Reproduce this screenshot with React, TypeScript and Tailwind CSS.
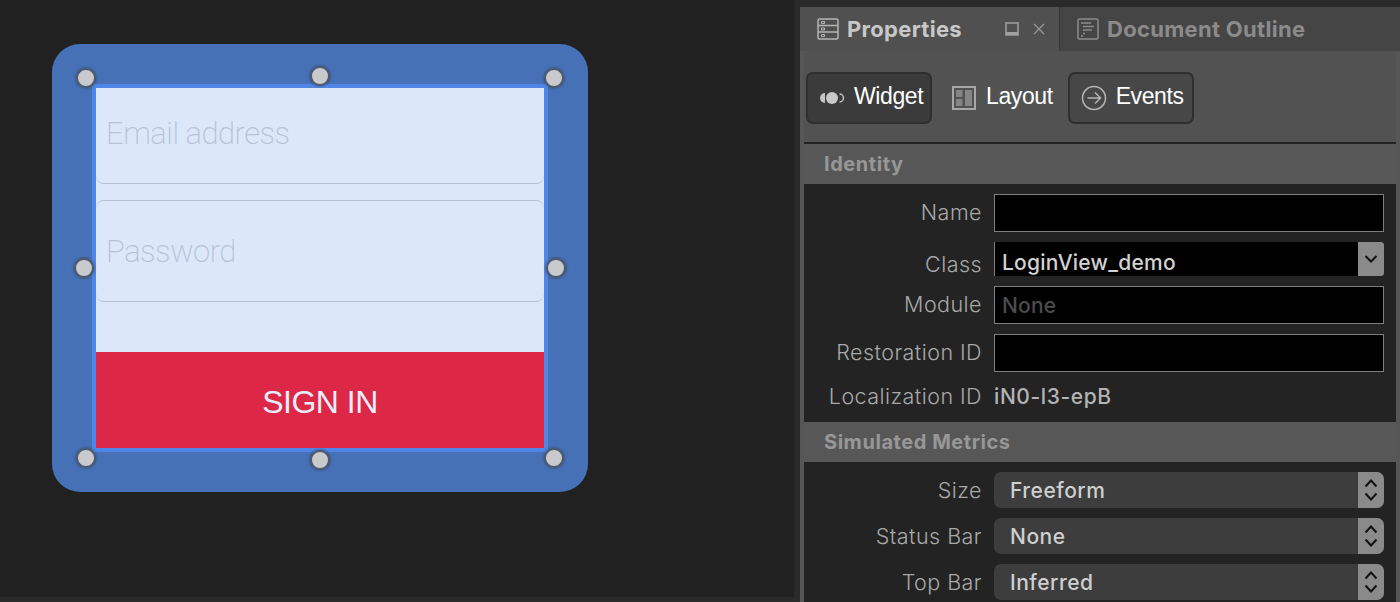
import type { ReactNode } from "react";

const sans = "font-['Inter','Noto_Sans',sans-serif]";
const helv = "font-['Liberation_Sans',Arial,sans-serif]";
const thin = "font-['Roboto','Noto_Sans',sans-serif]";

const Handle = ({ className }: { className: string }) => (
  <div className={`absolute h-[20px] w-[20px] rounded-full border-2 border-[#4f5b6e] bg-[#c9cacd] shadow-[0_0_3px_#33415c] ${className}`} />
);

const Row = ({ label, className, labelClass = "", children }: { label: string; className: string; labelClass?: string; children: ReactNode }) => (
  <div className={`flex ${className}`}>
    <div className={`w-[178px] shrink-0 self-center text-right text-[21.5px] font-light leading-none tracking-[0.45px] text-[#a8a8a8] ${sans} ${labelClass}`}>{label}</div>
    <div className="ml-[12px] h-full w-[390px] shrink-0">{children}</div>
  </div>
);

const TextBox = ({ children }: { children?: ReactNode }) => (
  <div className={`flex h-full items-center border border-[#7d7d7d] bg-black pl-[7px] pt-[2px] text-[21px] font-medium tracking-[0.2px] text-[#4c4c4c] ${sans}`}>
    {children}
  </div>
);

const Stepper = ({ label, value, className }: { label: string; value: string; className: string }) => (
  <Row label={label} className={className} labelClass="pt-[2px]">
    <div className="flex h-full overflow-hidden rounded-[7px] bg-[#3d3d3d]">
      <div className={`flex-1 pl-[16px] pt-[1px] text-[21px] font-medium leading-[36px] tracking-[0.5px] text-[#cfcfcf] ${sans}`}>{value}</div>
      <div className="flex w-[26px] items-center justify-center bg-[#8a8a8a]">
        <svg width="14" height="26" viewBox="0 0 14 26" fill="none" stroke="#111" strokeWidth="2">
          <path d="M1.5 9.5 7 3.5l5.5 6" />
          <path d="M1.5 16.5 7 22.5l5.5-6" />
        </svg>
      </div>
    </div>
  </Row>
);

const SectionHeader = ({ title }: { title: string }) => (
  <div className={`h-[40px] bg-[#575757] pl-[20px] text-[20px] font-bold leading-[40px] tracking-[0.55px] text-[#979797] ${sans}`}>{title}</div>
);

export default function App() {
  return (
    <div className="flex h-[602px] w-[1400px] overflow-hidden bg-[#2a2a2a]">
      {/* Canvas */}
      <div className="h-[597px] w-[794px] shrink-0 bg-[#212121] pl-[52px] pt-[44px]">
        <div className="relative h-[448px] w-[536px] rounded-[28px] bg-[#4671b7] pl-[40px] pt-[40px]">
          <div className="h-[368px] w-[456px] border-4 border-[#4f86e8] bg-[#dce8fa]">
            <div className={`h-[96px] rounded-b-[8px] border-b border-[#b4bed2] pl-[10px] text-[31px] font-extralight leading-[92px] tracking-[-0.5px] text-[#b7c2d8] ${thin}`}>
              Email address
            </div>
            <div className={`mt-[16px] h-[102px] rounded-[8px] border-y border-[#b4bed2] pl-[10px] text-[31px] font-extralight leading-[102px] tracking-[-0.5px] text-[#b7c2d8] ${thin}`}>
              Password
            </div>
            <div className="h-[50px]" />
            <div className={`flex h-[96px] items-center justify-center bg-[#dc2747] pt-[3px] text-[32px] tracking-[-0.5px] text-[#e6edf9] ${helv}`}>SIGN IN</div>
          </div>
          <Handle className="left-[24px] top-[24px]" />
          <Handle className="left-[258px] top-[22px]" />
          <Handle className="left-[492px] top-[24px]" />
          <Handle className="left-[22px] top-[214px]" />
          <Handle className="left-[494px] top-[214px]" />
          <Handle className="left-[24px] top-[404px]" />
          <Handle className="left-[258px] top-[406px]" />
          <Handle className="left-[492px] top-[404px]" />
        </div>
      </div>

      {/* Inspector */}
      <div className="ml-[6px] flex w-[600px] shrink-0 flex-col pt-[7px]">
        <div className="flex h-[44px]">
          <div className="flex w-[259px] shrink-0 items-center bg-[#505050] pl-[17px]">
            <svg className="shrink-0" width="22" height="22" viewBox="0 0 22 22" fill="none" stroke="#b5b5b5" strokeWidth="1.5">
              <rect x="1" y="1" width="20" height="20" rx="1.5" />
              <path d="M1 7.5h20M1 14h20" />
              <path d="M4.5 3.5h3v2h-3zM4.5 10h3v2h-3zM4.5 16.5h3v2h-3z" strokeWidth="1" />
            </svg>
            <span className={`ml-[8px] text-[22px] font-bold tracking-[0.3px] text-[#c8c8c8] ${sans}`}>Properties</span>
            <svg className="ml-[43px] shrink-0" width="14" height="14" viewBox="0 0 14 14">
              <rect x="1" y="1" width="12" height="12" fill="none" stroke="#a0a0a0" strokeWidth="1.5" />
              <rect x="1" y="10" width="12" height="3" fill="#a0a0a0" />
            </svg>
            <svg className="ml-[13px] shrink-0" width="14" height="14" viewBox="0 0 14 14" stroke="#959595" strokeWidth="1.4">
              <path d="M2 2l10 10M12 2 2 12" />
            </svg>
          </div>
          <div className="flex flex-1 items-center border-l border-[#383838] bg-[#454545] pl-[17px]">
            <svg className="shrink-0" width="22" height="22" viewBox="0 0 22 22" fill="none" stroke="#8c8c8c" strokeWidth="1.5">
              <rect x="1" y="1" width="20" height="20" rx="1.5" />
              <path d="M4 5h10M6 8.5h11M6 12h9M6 15.5h2M4 18h2" strokeWidth="1.3" />
            </svg>
            <span className={`ml-[8px] text-[22px] font-bold tracking-[0.3px] text-[#8b8b8b] ${sans}`}>Document Outline</span>
          </div>
        </div>

        <div className="flex-1 border-x-4 border-[#565656] bg-[#525252]">
          {/* Widget / Layout / Events */}
          <div className={`flex h-[91px] items-start pl-[2px] pt-[21px] text-[23px] tracking-[-0.4px] text-white ${helv}`}>
            <div className="flex h-[52px] w-[126px] items-center rounded-[7px] border-2 border-[#2f2f2f] bg-[#3b3b3b] pl-[10px]">
              <svg className="shrink-0" width="27" height="14" viewBox="0 0 27 14">
                <path d="M7 2A5 5 0 0 0 7 12z" fill="#c4c4c4" />
                <circle cx="14" cy="7" r="6" fill="#c8c8c8" />
                <path d="M21.5 3a4 4 0 0 1 0 8" fill="none" stroke="#c4c4c4" strokeWidth="1.5" />
              </svg>
              <span className="ml-[9px] pb-[3px]">Widget</span>
            </div>
            <div className="ml-[20px] flex h-[52px] items-center">
              <svg className="shrink-0" width="24" height="24" viewBox="0 0 24 24">
                <rect x="1" y="1" width="22" height="22" fill="none" stroke="#a8a8a8" strokeWidth="2" />
                <rect x="4" y="4" width="6.5" height="7" fill="#858585" />
                <rect x="4" y="13" width="6.5" height="7" fill="#858585" />
                <rect x="13" y="4" width="7" height="16" fill="#858585" />
              </svg>
              <span className="ml-[10px] pb-[3px]">Layout</span>
            </div>
            <div className="ml-[15px] flex h-[52px] w-[126px] items-center rounded-[7px] border-2 border-[#2f2f2f] bg-[#474747] pl-[11px]">
              <svg className="shrink-0" width="26" height="26" viewBox="0 0 26 26" fill="none" stroke="#b5b5b5" strokeWidth="1.5">
                <circle cx="13" cy="13" r="11.5" />
                <path d="M6.5 13h13M14 7.5l5.5 5.5-5.5 5.5" />
              </svg>
              <span className="ml-[9px] pb-[3px]">Events</span>
            </div>
          </div>

          <div className="h-[2px] bg-[#242424]" />
          <SectionHeader title="Identity" />

          <div className="h-[238px] bg-[#232323] pt-[10px]">
            <Row label="Name" className="h-[38px]"><TextBox /></Row>
            <Row label="Class" className="mt-[10px] h-[34px]" labelClass="pt-[11px]">
              <div className="flex h-full overflow-hidden rounded-r-[3px] border-l border-[#7d7d7d] bg-black">
                <div className={`flex-1 pl-[7px] pt-[1px] text-[21px] font-medium leading-[40px] tracking-[0.25px] text-[#d2d2d2] ${sans}`}>LoginView_demo</div>
                <div className="flex w-[26px] items-center justify-center bg-[#8a8a8a]">
                  <svg width="14" height="10" viewBox="0 0 14 10" fill="none" stroke="#111" strokeWidth="2">
                    <path d="M1.5 2 7 7.5 12.5 2" />
                  </svg>
                </div>
              </div>
            </Row>
            <Row label="Module" className="mt-[10px] h-[38px]"><TextBox>None</TextBox></Row>
            <Row label="Restoration ID" className="mt-[10px] h-[38px]"><TextBox /></Row>
            <Row label="Localization ID" className="mt-[6px] h-[38px]">
              <div className={`text-[21px] font-medium leading-[38px] tracking-[0.6px] text-[#b4b4b4] ${sans}`}>iN0-l3-epB</div>
            </Row>
          </div>

          <SectionHeader title="Simulated Metrics" />

          <div className="h-[140px] bg-[#232323] pt-[10px]">
            <Stepper label="Size" value="Freeform" className="h-[36px]" />
            <Stepper label="Status Bar" value="None" className="mt-[10px] h-[36px]" />
            <Stepper label="Top Bar" value="Inferred" className="mt-[10px] h-[36px]" />
          </div>
        </div>
      </div>
    </div>
  );
}
